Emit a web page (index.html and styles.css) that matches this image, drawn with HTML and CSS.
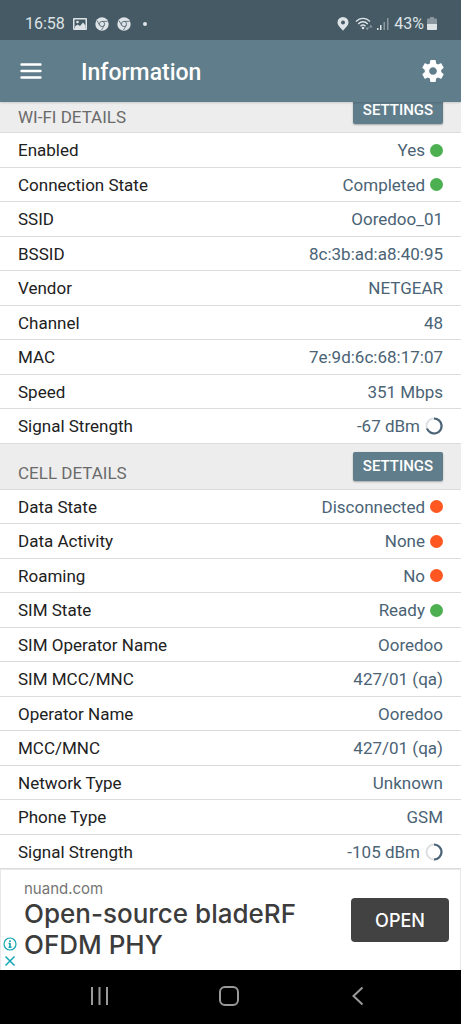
FILE: index.html
```html
<!DOCTYPE html>
<html lang="en">
<head>
<meta charset="utf-8">
<meta name="viewport" content="width=device-width, initial-scale=1">
<title>Information</title>
<link rel="stylesheet" href="styles.css">
</head>
<body>
<div class="app">
  <div class="status-bar">
    <div class="status-left">
      <span>16:58</span>
      <svg class="icon-photo" viewBox="0 0 14 14"><path fill="currentColor" fill-rule="evenodd" d="M1 1h12a1 1 0 0 1 1 1v10a1 1 0 0 1-1 1H1a1 1 0 0 1-1-1V2a1 1 0 0 1 1-1zm.5 1.500v9h11v-9z"/><circle cx="4.500" cy="5" r="1.300" fill="currentColor"/><path fill="currentColor" d="M2 11V9.500l2.500-2L7 9l3-3.500 2.500 3V12H2z"/></svg>
      <svg class="icon-chrome" viewBox="0 0 14 14"><circle cx="7" cy="7" r="6.700" fill="currentColor"/><g fill="none" stroke="#5c6e77" stroke-width=".9"><circle cx="7" cy="7" r="2.600"/><path d="M7 4.400h5.500M4.700 8.300L2 3.500M9.300 8.300L6.500 13"/></g></svg>
      <svg class="icon-chrome" viewBox="0 0 14 14"><circle cx="7" cy="7" r="6.700" fill="currentColor"/><g fill="none" stroke="#5c6e77" stroke-width=".9"><circle cx="7" cy="7" r="2.600"/><path d="M7 4.400h5.500M4.700 8.300L2 3.500M9.300 8.300L6.500 13"/></g></svg>
      <span class="more-dot"></span>
    </div>
    <div class="status-right">
      <svg class="icon-pin" viewBox="0 0 12 14"><path fill="currentColor" fill-rule="evenodd" d="M6 0a5.500 5.500 0 0 1 5.500 5.500C11.500 8.700 8 11 6 13.800 4 11 .5 8.700.5 5.500A5.500 5.500 0 0 1 6 0zm0 3.400a2 2 0 1 0 0 4 2 2 0 0 0 0-4z"/></svg>
      <svg class="icon-wifi" viewBox="0 0 18 14"><g fill="none" stroke="currentColor" stroke-width="1.300"><path d="M1 4.500C5 .2 11 .2 15 4.500M3.200 7c2.800-3 6.800-3 9.600 0M5.500 9.300c1.500-1.500 3.500-1.500 5 0"/></g><circle cx="8" cy="11" r="1.300" fill="currentColor"/><path fill="currentColor" opacity=".45" d="M10.500 10.500h3.500l-1.700 3zM14 10.500h3.500l-1.700-3z"/></svg>
      <svg class="icon-cell" viewBox="0 0 14 14"><g fill="currentColor"><path d="M1 11h1.500v2H1zM4 8h1.500v5H4z"/><path opacity=".45" d="M7.500 5H9v8H7.500zM11 1h1.500v12H11z"/></g></svg>
      <span>43%</span>
      <svg class="icon-battery" viewBox="0 0 10 14"><path fill="currentColor" opacity=".45" d="M3 0h4v1.500h2a1 1 0 0 1 1 1V7H0V2.500a1 1 0 0 1 1-1h2z"/><path fill="currentColor" d="M0 7h10v5a1 1 0 0 1-1 1H1a1 1 0 0 1-1-1z"/></svg>
    </div>
  </div>

  <header class="app-bar">
    <button class="icon-button" type="button" aria-label="Menu"><svg class="icon-menu" viewBox="0 0 22 16"><path stroke="currentColor" stroke-width="2.400" stroke-linecap="round" d="M1.500 1.500h19M1.500 8h19M1.500 14.500h19"/></svg></button>
    <h1 class="title">Information</h1>
    <button class="icon-button" type="button" aria-label="Preferences"><svg class="icon-gear" viewBox="2 2 20 20"><path fill="currentColor" d="M19.430 12.980c.04-.32.070-.64.070-.98s-.03-.66-.07-.98l2.110-1.650c.19-.15.240-.42.120-.64l-2-3.460c-.12-.22-.39-.3-.61-.22l-2.490 1c-.52-.4-1.080-.73-1.690-.98l-.38-2.650C14.460 2.180 14.250 2 14 2h-4c-.25 0-.46.180-.49.420l-.38 2.650c-.61.250-1.170.590-1.690.980l-2.490-1c-.23-.09-.49 0-.61.220l-2 3.460c-.13.220-.07.490.120.640l2.110 1.650c-.04.320-.07.650-.07.980s.030.660.070.980l-2.110 1.650c-.19.150-.24.420-.12.640l2 3.460c.12.220.39.300.61.220l2.490-1c.52.400 1.080.730 1.690.980l.38 2.650c.03.240.24.420.49.420h4c.25 0 .46-.18.490-.42l.38-2.650c.61-.25 1.170-.59 1.690-.98l2.490 1c.23.090.490 0 .61-.22l2-3.460c.12-.22.070-.49-.12-.64l-2.110-1.650zM12 15.500c-1.930 0-3.500-1.570-3.500-3.500s1.570-3.500 3.500-3.500 3.500 1.570 3.500 3.500-1.570 3.500-3.500 3.500z"/></svg></button>
  </header>

  <main class="details">
    <div class="section-head section-head-scrolled"><h2 class="section-title">WI-FI DETAILS</h2><button class="settings" type="button">SETTINGS</button></div>
    <dl class="rows rows-wifi">
      <div class="row"><dt>Enabled</dt><dd>Yes<span class="dot dot-on"></span></dd></div>
      <div class="row"><dt>Connection State</dt><dd>Completed<span class="dot dot-on"></span></dd></div>
      <div class="row"><dt>SSID</dt><dd>Ooredoo_01</dd></div>
      <div class="row"><dt>BSSID</dt><dd>8c:3b:ad:a8:40:95</dd></div>
      <div class="row"><dt>Vendor</dt><dd>NETGEAR</dd></div>
      <div class="row"><dt>Channel</dt><dd>48</dd></div>
      <div class="row"><dt>MAC</dt><dd>7e:9d:6c:68:17:07</dd></div>
      <div class="row"><dt>Speed</dt><dd>351 Mbps</dd></div>
      <div class="row"><dt>Signal Strength</dt><dd>-67 dBm<svg class="gauge" viewBox="0 0 18 18"><circle cx="9" cy="9" r="7.500" fill="none" stroke="#dde1e3" stroke-width="2"/><path d="M9 1.500a7.500 7.500 0 1 1-7 10" fill="none" stroke="#4a6375" stroke-width="2.200"/></svg></dd></div>
    </dl>
    <div class="section-head"><h2 class="section-title">CELL DETAILS</h2><button class="settings" type="button">SETTINGS</button></div>
    <dl class="rows rows-cell">
      <div class="row"><dt>Data State</dt><dd>Disconnected<span class="dot dot-off"></span></dd></div>
      <div class="row"><dt>Data Activity</dt><dd>None<span class="dot dot-off"></span></dd></div>
      <div class="row"><dt>Roaming</dt><dd>No<span class="dot dot-off"></span></dd></div>
      <div class="row"><dt>SIM State</dt><dd>Ready<span class="dot dot-on"></span></dd></div>
      <div class="row"><dt>SIM Operator Name</dt><dd>Ooredoo</dd></div>
      <div class="row"><dt>SIM MCC/MNC</dt><dd>427/01 (qa)</dd></div>
      <div class="row"><dt>Operator Name</dt><dd>Ooredoo</dd></div>
      <div class="row"><dt>MCC/MNC</dt><dd>427/01 (qa)</dd></div>
      <div class="row"><dt>Network Type</dt><dd>Unknown</dd></div>
      <div class="row"><dt>Phone Type</dt><dd>GSM</dd></div>
      <div class="row"><dt>Signal Strength</dt><dd>-105 dBm<svg class="gauge" viewBox="0 0 18 18"><circle cx="9" cy="9" r="7.500" fill="none" stroke="#dde1e3" stroke-width="2"/><path d="M9 1.500a7.500 7.500 0 0 1 0 15" fill="none" stroke="#4a6375" stroke-width="2.200"/></svg></dd></div>
    </dl>
  </main>

  <aside class="ad">
    <div class="ad-marks">
      <svg class="ad-info" viewBox="0 0 14 14"><circle cx="7" cy="7" r="6" fill="none" stroke="currentColor" stroke-width="1.200"/><path stroke="currentColor" stroke-width="1.600" d="M7 6v4.500M7 3.300v1.600M5.500 6.500H7M5.500 10.200h3"/></svg>
      <svg class="ad-close" viewBox="0 0 14 14"><path stroke="currentColor" stroke-width="1.500" d="M2.500 2.500l9 9M11.500 2.500l-9 9"/></svg>
    </div>
    <div class="ad-copy">
      <p class="ad-domain">nuand.com</p>
      <p class="ad-headline">Open-source bladeRF OFDM PHY</p>
    </div>
    <button class="ad-open" type="button">OPEN</button>
  </aside>

  <nav class="nav-bar">
    <button class="nav-button" type="button" aria-label="Recent apps"><svg class="nav-icon" viewBox="0 0 22 22"><path stroke="currentColor" stroke-width="2" d="M4 2v18M11.500 2v18M19 2v18"/></svg></button>
    <button class="nav-button" type="button" aria-label="Home"><svg class="nav-icon" viewBox="0 0 22 22"><rect x="2" y="2" width="18" height="18" rx="5" fill="none" stroke="currentColor" stroke-width="2"/></svg></button>
    <button class="nav-button" type="button" aria-label="Back"><svg class="nav-icon" viewBox="0 0 22 22"><path fill="none" stroke="currentColor" stroke-width="2" d="M15.500 2.500L6.500 11l9 8.500"/></svg></button>
  </nav>
</div>
</body>
</html>
```
FILE: styles.css
```css
* { box-sizing: border-box; }
body { margin: 0; background: #fff; font-family: Roboto, "Noto Sans", sans-serif; }
h1, h2, p, dl, dd { margin: 0; }
svg { display: block; flex: none; }
button { border: 0; padding: 0; font-family: inherit; cursor: pointer; }

.app { display: flex; flex-direction: column; min-height: 100vh; }

.status-bar {
  display: flex; justify-content: space-between; align-items: center;
  height: 40px; padding: 7px 24px 0 25px;
  background: #455a64; color: #dde3e6; font-size: 16px;
}
.status-left { display: flex; align-items: center; gap: 8px; }
.status-right { display: flex; align-items: center; gap: 3px; }
.icon-photo, .icon-chrome { width: 14px; height: 14px; }
.more-dot { width: 4px; height: 4px; margin-left: 4px; border-radius: 50%; background: currentColor; }
.icon-pin { width: 12px; height: 14px; margin-right: 3px; }
.icon-wifi { width: 18px; height: 14px; }
.icon-cell { width: 14px; height: 14px; margin-right: 1px; }
.icon-battery { width: 10px; height: 14px; }

.app-bar {
  display: flex; align-items: center; height: 62px; padding: 0 17px 0 20px;
  background: #607d8b; color: #fff; z-index: 1;
  box-shadow: 0 1px 2px rgba(0, 0, 0, .15);
}
.icon-button { background: none; color: #fff; }
.icon-menu { width: 22px; height: 16px; }
.icon-gear { width: 22px; height: 22px; }
.title { flex: 1; margin-left: 39px; padding-top: 4px; font-size: 23px; font-weight: 500; line-height: 28px; }

.details { display: flex; flex-direction: column; flex: 1; overflow: hidden; }
.section-head {
  display: flex; align-items: center; justify-content: space-between; flex: none;
  height: 46px; padding: 0 18px; background: #ededed; border-bottom: 1px solid #dcdcdc;
}
.section-head-scrolled { margin-top: -15px; }
.section-title { padding-top: 14px; font-size: 17px; font-weight: 400; line-height: 20px; color: #6a6a6a; }
.settings {
  width: 90px; height: 29px; border-radius: 2px; background: #607d8b; color: #fff;
  font-size: 15px; font-weight: 500; box-shadow: 0 1px 2px rgba(0, 0, 0, .3);
}
.rows { display: flex; flex-direction: column; flex: 9 0 auto; }
.rows-cell { flex-grow: 11; }
.row {
  display: flex; flex: 1 0 34px; align-items: center; justify-content: space-between;
  padding: 1px 18px 0; border-bottom: 1px solid #dcdcdc; font-size: 17px; line-height: 20px; color: #212121;
}
.row dd { display: flex; align-items: center; gap: 5px; color: #4a6375; }
.dot { width: 13px; height: 13px; border-radius: 50%; }
.dot-on { background: #4caf50; }
.dot-off { background: #ff5722; }
.gauge { width: 18px; height: 18px; }

.ad {
  display: flex; align-items: center; min-height: 101px; padding-right: 11px;
  border: 1px solid #e8e8e8; border-bottom: 0; font-family: Inter, sans-serif; color: #3c3c3c;
}
.ad-marks { display: flex; flex-direction: column; gap: 3px; align-self: flex-end; padding: 0 7px 2px 2px; color: #12a5b5; }
.ad-info, .ad-close { width: 14px; height: 14px; }
.ad-copy { flex: 1; }
.ad-domain { font-size: 15px; line-height: 18px; color: #757575; }
.ad-headline { max-width: 290px; font-size: 26px; line-height: 31px; font-weight: 500; }
.ad-open { width: 98px; height: 44px; border-radius: 4px; background: #424242; color: #fff; font-size: 18px; font-weight: 500; }

.nav-bar { display: flex; justify-content: space-between; align-items: center; height: 54px; padding: 0 92px 2px 88px; background: #000; }
.nav-button { background: none; color: #9a9a9a; }
.nav-icon { width: 22px; height: 22px; }
```
